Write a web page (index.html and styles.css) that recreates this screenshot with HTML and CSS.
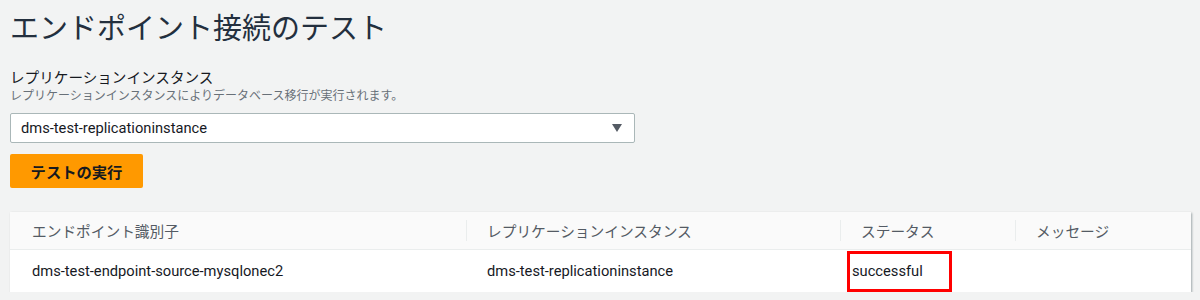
FILE: index.html
```html
<!DOCTYPE html>
<html lang="ja">

<head>
    <meta charset="UTF-8">
    <title>エンドポイント接続のテスト</title>
    <link rel="stylesheet" href="styles.css">
</head>

<body>
    <div class="page">
        <h1 class="title">エンドポイント接続のテスト</h1>

        <div class="field">
            <div class="field-label">レプリケーションインスタンス</div>
            <div class="field-desc">レプリケーションインスタンスによりデータベース移行が実行されます。</div>
            <div class="select">
                <span>dms-test-replicationinstance</span>
                <span class="caret"></span>
            </div>
        </div>

        <button class="run-btn">テストの実行</button>

        <div class="results">
            <div class="row head">
                <div class="cell c1">エンドポイント識別子</div>
                <div class="cell c2">レプリケーションインスタンス</div>
                <div class="cell c3">ステータス</div>
                <div class="cell c4">メッセージ</div>
            </div>
            <div class="row body">
                <div class="cell c1">dms-test-endpoint-source-mysqlonec2</div>
                <div class="cell c2">dms-test-replicationinstance</div>
                <div class="cell c3"><span class="status">successful</span></div>
                <div class="cell c4"></div>
            </div>
        </div>
    </div>
</body>

</html>
```

FILE: styles.css
```css
body {
    margin: 0;
    background-color: #f2f3f3;
    font-family: Roboto, "Noto Sans CJK JP", sans-serif;
    color: #16191f;
}

.page {
    padding: 10px 9px 0 10px;
}

.title {
    margin: 0;
    font-size: 29px;
    font-weight: 400;
    line-height: 38px;
    color: #232f3e;
}

.field {
    margin-top: 20px;
}

.field-label {
    font-size: 14.6px;
    line-height: 20px;
}

.field-desc {
    font-size: 12px;
    line-height: 16px;
    color: #687078;
}

.select {
    width: 625px;
    height: 30px;
    margin-top: 9px;
    display: flex;
    align-items: center;
    justify-content: space-between;
    padding: 0 10px;
    box-sizing: border-box;
    background-color: white;
    border: 1px solid #aab7b8;
    border-radius: 2px;
    font-size: 14.7px;
}

.select .caret {
    width: 0;
    height: 0;
    border-left: 5px solid transparent;
    border-right: 5px solid transparent;
    border-top: 8px solid #545b64;
    margin-right: 2px;
}

.run-btn {
    display: block;
    margin-top: 11px;
    width: 133px;
    height: 34px;
    border: none;
    border-radius: 2px;
    background-color: #ff9900;
    font-family: inherit;
    font-size: 15.3px;
    font-weight: 700;
    color: #16191f;
}

.results {
    margin-top: 24px;
    width: 1181px;
    background-color: white;
    box-shadow: 1px 1px 2px rgba(0, 28, 36, 0.35);
}

.row {
    display: flex;
    font-size: 14.7px;
}

.row.head {
    height: 37px;
    background-color: #fafafa;
    border-bottom: 1px solid #eaeded;
    color: #545b64;
}

.row.body {
    height: 42px;
}

.cell {
    display: flex;
    align-items: center;
    padding-left: 22px;
    box-sizing: border-box;
}

.row.head .cell + .cell {
    border-left: 1px solid #eaeded;
    margin: 8px 0;
    padding-left: 20px;
}

.row.body .cell + .cell {
    padding-left: 21px;
}

.c1 { width: 456px; }
.c2 { width: 374px; }
.c3 { width: 175px; }
.c4 { flex: 1; }

.row.body .cell.c3 {
    padding-left: 7px;
}

.status {
    display: flex;
    align-items: center;
    width: 105px;
    height: 41px;
    padding-left: 2px;
    box-sizing: border-box;
    border: 3px solid #ff0000;
}
```
